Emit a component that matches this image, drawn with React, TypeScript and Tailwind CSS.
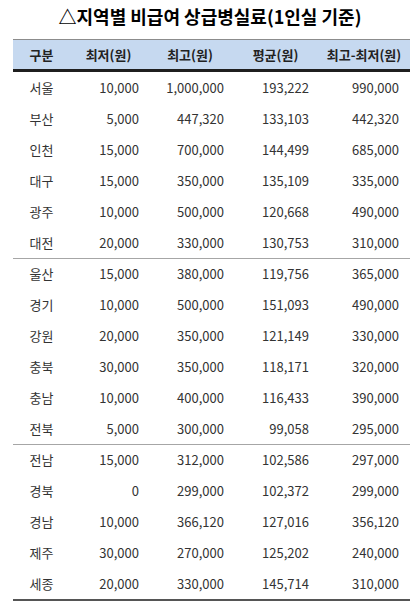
import React from 'react';

type Row = [string, string, string, string, string];

const groups: Row[][] = [
    [
        ['서울', '10,000', '1,000,000', '193,222', '990,000'],
        ['부산', '5,000', '447,320', '133,103', '442,320'],
        ['인천', '15,000', '700,000', '144,499', '685,000'],
        ['대구', '15,000', '350,000', '135,109', '335,000'],
        ['광주', '10,000', '500,000', '120,668', '490,000'],
        ['대전', '20,000', '330,000', '130,753', '310,000'],
    ],
    [
        ['울산', '15,000', '380,000', '119,756', '365,000'],
        ['경기', '10,000', '500,000', '151,093', '490,000'],
        ['강원', '20,000', '350,000', '121,149', '330,000'],
        ['충북', '30,000', '350,000', '118,171', '320,000'],
        ['충남', '10,000', '400,000', '116,433', '390,000'],
        ['전북', '5,000', '300,000', '99,058', '295,000'],
    ],
    [
        ['전남', '15,000', '312,000', '102,586', '297,000'],
        ['경북', '0', '299,000', '102,372', '299,000'],
        ['경남', '10,000', '366,120', '127,016', '356,120'],
        ['제주', '30,000', '270,000', '125,202', '240,000'],
        ['세종', '20,000', '330,000', '145,714', '310,000'],
    ],
];

const headers = ['구분', '최저(원)', '최고(원)', '평균(원)', '최고-최저(원)'];

const cols = 'grid grid-cols-[57px_77px_86px_85px_92px]';
const cellPad = ['', 'pr-2', 'pr-[9px]', 'pr-[9px]', 'pr-[11px]'];

export default function App() {
    return (
        <div
            className="w-[420px] h-[609px] bg-white overflow-hidden"
            style={{ fontFamily: '"Noto Sans CJK KR", "Noto Sans", sans-serif' }}
        >
            <h1 className="h-[39px] pt-[1px] text-center text-[18px] font-bold text-black leading-[30px]">
                △지역별 비급여 상급병실료(1인실 기준)
            </h1>
            <div className="mx-[13px] w-[397px]">
                <div className={`${cols} h-[33px] bg-[#c6d9f0] border-t border-[#8c8c8c] border-b-[3px] border-b-[#1f1f1f] text-[13px] font-bold text-[#222]`}>
                    {headers.map((h) => (
                        <div key={h} className="flex items-center justify-center">
                            {h}
                        </div>
                    ))}
                </div>
                {groups.map((group, gi) => (
                    <div key={gi} className={gi > 0 ? 'border-t border-[#a6a6a6]' : ''}>
                        {group.map((row, ri) => (
                            <div
                                key={row[0]}
                                className={`${cols} ${gi > 0 && ri === 0 ? 'h-[30px]' : 'h-[31px]'} text-[13px] text-[#333]`}
                            >
                                {row.map((cell, ci) => (
                                    <div
                                        key={ci}
                                        className={`flex items-center ${ci === 0 ? 'justify-center' : 'justify-end'} ${cellPad[ci]}`}
                                    >
                                        {cell}
                                    </div>
                                ))}
                            </div>
                        ))}
                    </div>
                ))}
                <div className="h-[2px] bg-[#555]" />
            </div>
        </div>
    );
}
